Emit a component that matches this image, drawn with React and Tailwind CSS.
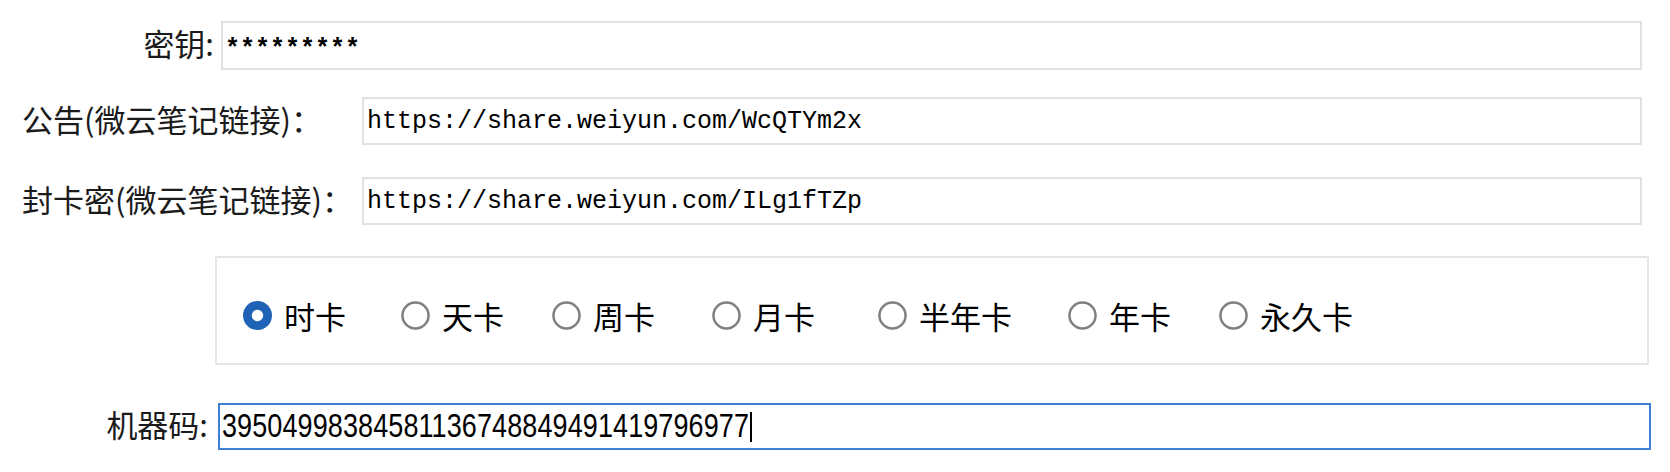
import React from "react";

const cardTypes = [
  { label: "时卡", width: "w-[158px]", checked: true },
  { label: "天卡", width: "w-[151px]" },
  { label: "周卡", width: "w-[160px]" },
  { label: "月卡", width: "w-[166px]" },
  { label: "半年卡", width: "w-[190px]" },
  { label: "年卡", width: "w-[151px]" },
  { label: "永久卡", width: "w-auto" },
];

function Radio({ checked }) {
  if (checked) {
    return (
      <svg width="29" height="29" viewBox="0 0 28 28" className="shrink-0">
        <circle cx="14" cy="14" r="14" fill="#1f63b6" />
        <circle cx="14" cy="14" r="5.5" fill="#ffffff" />
      </svg>
    );
  }
  return (
    <svg width="29" height="29" viewBox="0 0 28 28" className="shrink-0">
      <circle cx="14" cy="14" r="12.6" fill="#ffffff" stroke="#808080" strokeWidth="2.4" />
    </svg>
  );
}

export default function App() {
  return (
    <div className="w-[1670px] h-[472px] bg-white pt-[21px] text-[#1b1b1b] font-['Noto_Sans_CJK_SC',sans-serif] text-[31px] leading-none overflow-hidden">
      {/* 密钥 */}
      <div className="flex items-center h-[49px]">
        <div className="w-[214px] text-right pb-[6px]">密钥:</div>
        <div className="ml-[7px] w-[1421px] h-full border-2 border-[#e2e2e2] flex items-center pl-[2px] pt-[8px] font-['Liberation_Mono',monospace] text-[25px] font-bold text-black">
          *********
        </div>
      </div>

      {/* 公告 */}
      <div className="flex items-center h-[48px] mt-[27px] pl-[22px]">
        <div className="w-[340px] pb-[6px]">公告(微云笔记链接)：</div>
        <div className="w-[1280px] h-full border-2 border-[#e2e2e2] flex items-center pl-[3px] font-['Liberation_Mono',monospace] text-[25px] text-black">
          https://share.weiyun.com/WcQTYm2x
        </div>
      </div>

      {/* 封卡密 */}
      <div className="flex items-center h-[48px] mt-[32px] pl-[22px]">
        <div className="w-[340px] pb-[6px]">封卡密(微云笔记链接)：</div>
        <div className="w-[1280px] h-full border-2 border-[#e2e2e2] flex items-center pl-[3px] font-['Liberation_Mono',monospace] text-[25px] text-black">
          https://share.weiyun.com/ILg1fTZp
        </div>
      </div>

      {/* 卡类型 */}
      <div className="ml-[215px] mt-[31px] w-[1434px] h-[109px] border-2 border-[#e6e6e6] flex items-center pl-[26px] pt-[10px]">
        {cardTypes.map((item) => (
          <div key={item.label} className={`${item.width} flex items-center gap-[12px]`}>
            <Radio checked={item.checked} />
            <span className="text-black">{item.label}</span>
          </div>
        ))}
      </div>

      {/* 机器码 */}
      <div className="flex items-center h-[47px] mt-[38px]">
        <div className="w-[208px] text-right pb-[6px]">机器码:</div>
        <div className="ml-[10px] w-[1433px] h-full border-2 border-[#3f80d2] flex items-center pl-[2px] font-['Liberation_Sans',sans-serif] text-[27px] text-black">
          <span className="inline-block scale-y-[1.2] tracking-[0.1px]">39504998384581136748849491419796977</span>
          <span className="w-[2px] h-[30px] bg-black ml-[1px]" />
        </div>
      </div>
    </div>
  );
}
